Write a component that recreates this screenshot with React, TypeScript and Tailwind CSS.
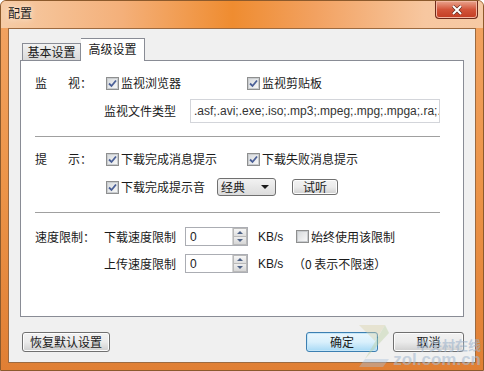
import * as React from "react";

const CJK = "font-['Noto_Sans_CJK_SC','Noto_Sans',sans-serif]";

function Check({ checked = false }: { checked?: boolean }) {
  return (
    <span className="inline-flex h-[13px] w-[13px] shrink-0 items-center justify-center border border-[#8e8f8f] bg-white">
      <span className="flex h-[11px] w-[11px] items-center justify-center border border-[#c9cccf] bg-gradient-to-br from-[#d9dcde] to-[#f7f7f7]">
        {checked && (
          <svg width="9" height="9" viewBox="0 0 9 9">
            <path d="M1 4.5 L3.5 7 L8 1.5" fill="none" stroke="#4a5f97" strokeWidth="1.8" />
          </svg>
        )}
      </span>
    </span>
  );
}

function CheckLabel({ checked, children }: { checked?: boolean; children: React.ReactNode }) {
  return (
    <span className="flex items-center gap-[2px] text-[12px] leading-none text-[#1a1a1a]">
      <Check checked={checked} />
      <span>{children}</span>
    </span>
  );
}

function Spinner() {
  return (
    <div className="flex h-[19px] w-[63px] border border-[#abadb3] bg-white">
      <span className="flex flex-1 items-center pl-[4px] font-['Liberation_Sans',sans-serif] text-[12px] text-[#222]">0</span>
      <div className="flex w-[15px] flex-col border-l border-[#d5d5d5]">
        <span className="flex flex-1 items-center justify-center border border-[#b9b9b9] bg-gradient-to-b from-[#f6f6f6] to-[#dedede]">
          <span className="h-0 w-0 border-x-[3px] border-b-[3px] border-x-transparent border-b-[#4d6185]" />
        </span>
        <span className="flex flex-1 items-center justify-center border border-t-0 border-[#b9b9b9] bg-gradient-to-b from-[#eeeeee] to-[#d6d6d6]">
          <span className="h-0 w-0 border-x-[3px] border-t-[3px] border-x-transparent border-t-[#4d6185]" />
        </span>
      </div>
    </div>
  );
}

function WinButton({ children, className = "", primary = false }: { children: React.ReactNode; className?: string; primary?: boolean }) {
  return (
    <div
      className={`flex items-center justify-center rounded-[3px] border text-[12px] leading-none text-[#1a1a1a] ${
        primary
          ? "border-[#3c7fb1] bg-gradient-to-b from-[#eaf6fd] via-[#d9f0fc] to-[#a7d9f5] shadow-[inset_0_0_0_1px_#c5e6f8]"
          : "border-[#707070] bg-gradient-to-b from-[#f2f2f2] via-[#ebebeb] to-[#cfcfcf] shadow-[inset_0_0_0_1px_#fcfcfc]"
      } ${className}`}
    >
      {children}
    </div>
  );
}

function Label({ a, b }: { a: string; b: string }) {
  return (
    <span className="flex w-[57px] justify-between text-[12px] leading-none text-[#1a1a1a]">
      <span>{a}</span>
      <span>{b}</span>
    </span>
  );
}

export default function App() {
  return (
    <div className={`relative h-[371px] w-[484px] overflow-hidden rounded-t-[6px] border border-[#8c5a2c] bg-gradient-to-b from-[#f2a463] via-[#ec9448] to-[#e07f34] ${CJK}`}>
      {/* title bar */}
      <div className="flex h-[27px] items-start justify-between bg-[linear-gradient(90deg,#f6cca6_0%,#f4b07a_25%,#ef8c30_48%,#f2a160_65%,#f7c7a0_88%,#f6c9a4_100%)] pl-[7px] pr-[5px]">
        <span className="mt-[6px] text-[12px] leading-none text-[#1c1c1c] [text-shadow:0_0_6px_#fff]">配置</span>
        <div className="flex h-[18px] w-[43px] items-center justify-center rounded-b-[4px] border border-t-0 border-[#6e2a1a] bg-gradient-to-b from-[#e9a48e] via-[#d2543a] to-[#c33c22] shadow-[inset_0_0_0_1px_#f2b6a2]">
          <svg width="12" height="10" viewBox="0 0 12 10">
            <path d="M2 1 L10 9 M10 1 L2 9" stroke="#5a2a20" strokeWidth="3.2" />
            <path d="M2 1 L10 9 M10 1 L2 9" stroke="#ffffff" strokeWidth="2" />
          </svg>
        </div>
      </div>

      {/* client */}
      <div className="mx-[7px] flex h-[335px] flex-col border border-[#9c6a40] bg-[#f0f0f0] px-[11px]">
        {/* tabs */}
        <div className="relative z-10 mt-[9px] flex h-[22px] items-end pl-[2px]">
          <div className="flex h-[17px] w-[59px] items-center justify-center border border-b-0 border-[#898c95] bg-gradient-to-b from-[#f2f2f2] to-[#d9d9d9] text-[12px] leading-none text-[#1a1a1a]">
            基本设置
          </div>
          <div className="-mb-px flex h-[23px] w-[64px] items-center justify-center border border-b-0 border-l-0 border-[#898c95] bg-white pb-[2px] text-[12px] leading-none text-[#1a1a1a]">
            高级设置
          </div>
        </div>

        {/* panel */}
        <div className="flex h-[257px] flex-col border border-[#898c95] bg-white pl-[14px] pt-[14px]">
          <div className="flex h-[16px] items-center">
            <span className="w-[71px]">
              <Label a="监" b="视：" />
            </span>
            <span className="w-[141px]">
              <CheckLabel checked>监视浏览器</CheckLabel>
            </span>
            <CheckLabel checked>监视剪贴板</CheckLabel>
          </div>

          <div className="mt-[8px] flex h-[24px] items-center">
            <span className="ml-[69px] w-[86px] text-[12px] leading-none text-[#1a1a1a]">监视文件类型</span>
            <div className="flex h-[24px] w-[250px] items-center overflow-hidden whitespace-nowrap border border-[#d3d5da] bg-white pl-[3px] font-['Liberation_Sans',sans-serif] text-[12px] text-[#333]">
              .asf;.avi;.exe;.iso;.mp3;.mpeg;.mpg;.mpga;.ra;.ram;.rm
            </div>
          </div>

          <div className="mt-[13px] h-px w-[405px] bg-[#a0a0a0]" />

          <div className="mt-[14px] flex h-[16px] items-center">
            <span className="w-[71px]">
              <Label a="提" b="示：" />
            </span>
            <span className="w-[141px]">
              <CheckLabel checked>下载完成消息提示</CheckLabel>
            </span>
            <CheckLabel checked>下载失败消息提示</CheckLabel>
          </div>

          <div className="mt-[11px] flex h-[18px] items-center">
            <span className="ml-[71px] w-[111px]">
              <CheckLabel checked>下载完成提示音</CheckLabel>
            </span>
            <div className="flex h-[18px] w-[59px] items-center justify-between rounded-[3px] border border-[#707070] bg-gradient-to-b from-[#f2f2f2] to-[#dcdcdc] pl-[3px] pr-[6px] text-[12px] leading-none text-[#1a1a1a]">
              <span>经典</span>
              <span className="h-0 w-0 border-x-[4px] border-t-[4px] border-x-transparent border-t-[#1a1a1a]" />
            </div>
            <WinButton className="ml-[16px] h-[16px] w-[46px]">试听</WinButton>
          </div>

          <div className="mt-[16px] h-px w-[405px] bg-[#a0a0a0]" />

          <div className="mt-[14px] flex h-[19px] items-center">
            <span className="w-[69px] text-[12px] leading-none text-[#1a1a1a]">速度限制：</span>
            <span className="w-[81px] text-[12px] leading-none text-[#1a1a1a]">下载速度限制</span>
            <Spinner />
            <span className="ml-[10px] w-[38px] font-['Liberation_Sans',sans-serif] text-[12px] text-[#1a1a1a]">KB/s</span>
            <CheckLabel>始终使用该限制</CheckLabel>
          </div>

          <div className="mt-[8px] flex h-[19px] items-center">
            <span className="ml-[69px] w-[81px] text-[12px] leading-none text-[#1a1a1a]">上传速度限制</span>
            <Spinner />
            <span className="ml-[10px] w-[35px] font-['Liberation_Sans',sans-serif] text-[12px] text-[#1a1a1a]">KB/s</span>
            <span className="text-[12px] leading-none text-[#1a1a1a]">（0 表示不限速）</span>
          </div>
        </div>

        {/* bottom buttons */}
        <div className="mt-[15px] flex h-[20px] items-center pl-[2px]">
          <WinButton className="h-[20px] w-[88px]">恢复默认设置</WinButton>
          <div className="flex-1" />
          <WinButton primary className="h-[20px] w-[72px]">确定</WinButton>
          <WinButton className="ml-[15px] h-[20px] w-[71px]">取消</WinButton>
        </div>
      </div>

      {/* watermark */}
      <div className="pointer-events-none absolute bottom-[0px] right-[2px] flex items-end opacity-60">
        <svg width="38" height="50" viewBox="0 0 38 50" className="mb-[1px]">
          <polygon points="4,6 30,6 20,22" fill="#d9d2a8" opacity="0.7" />
          <polygon points="30,6 34,14 10,40" fill="#b9d0a0" opacity="0.7" />
          <polygon points="10,40 34,40 28,48 4,48" fill="#a9c0dc" opacity="0.7" />
        </svg>
        <div className="mb-[1px] flex flex-col items-end">
          <span className="text-[13px] font-bold leading-none text-[#9fb4cc]">中关村在线</span>
          <span className="font-['Liberation_Sans',sans-serif] text-[17px] font-bold leading-[18px] text-[#a9bcd2]">zol.com.cn</span>
        </div>
      </div>
    </div>
  );
}
